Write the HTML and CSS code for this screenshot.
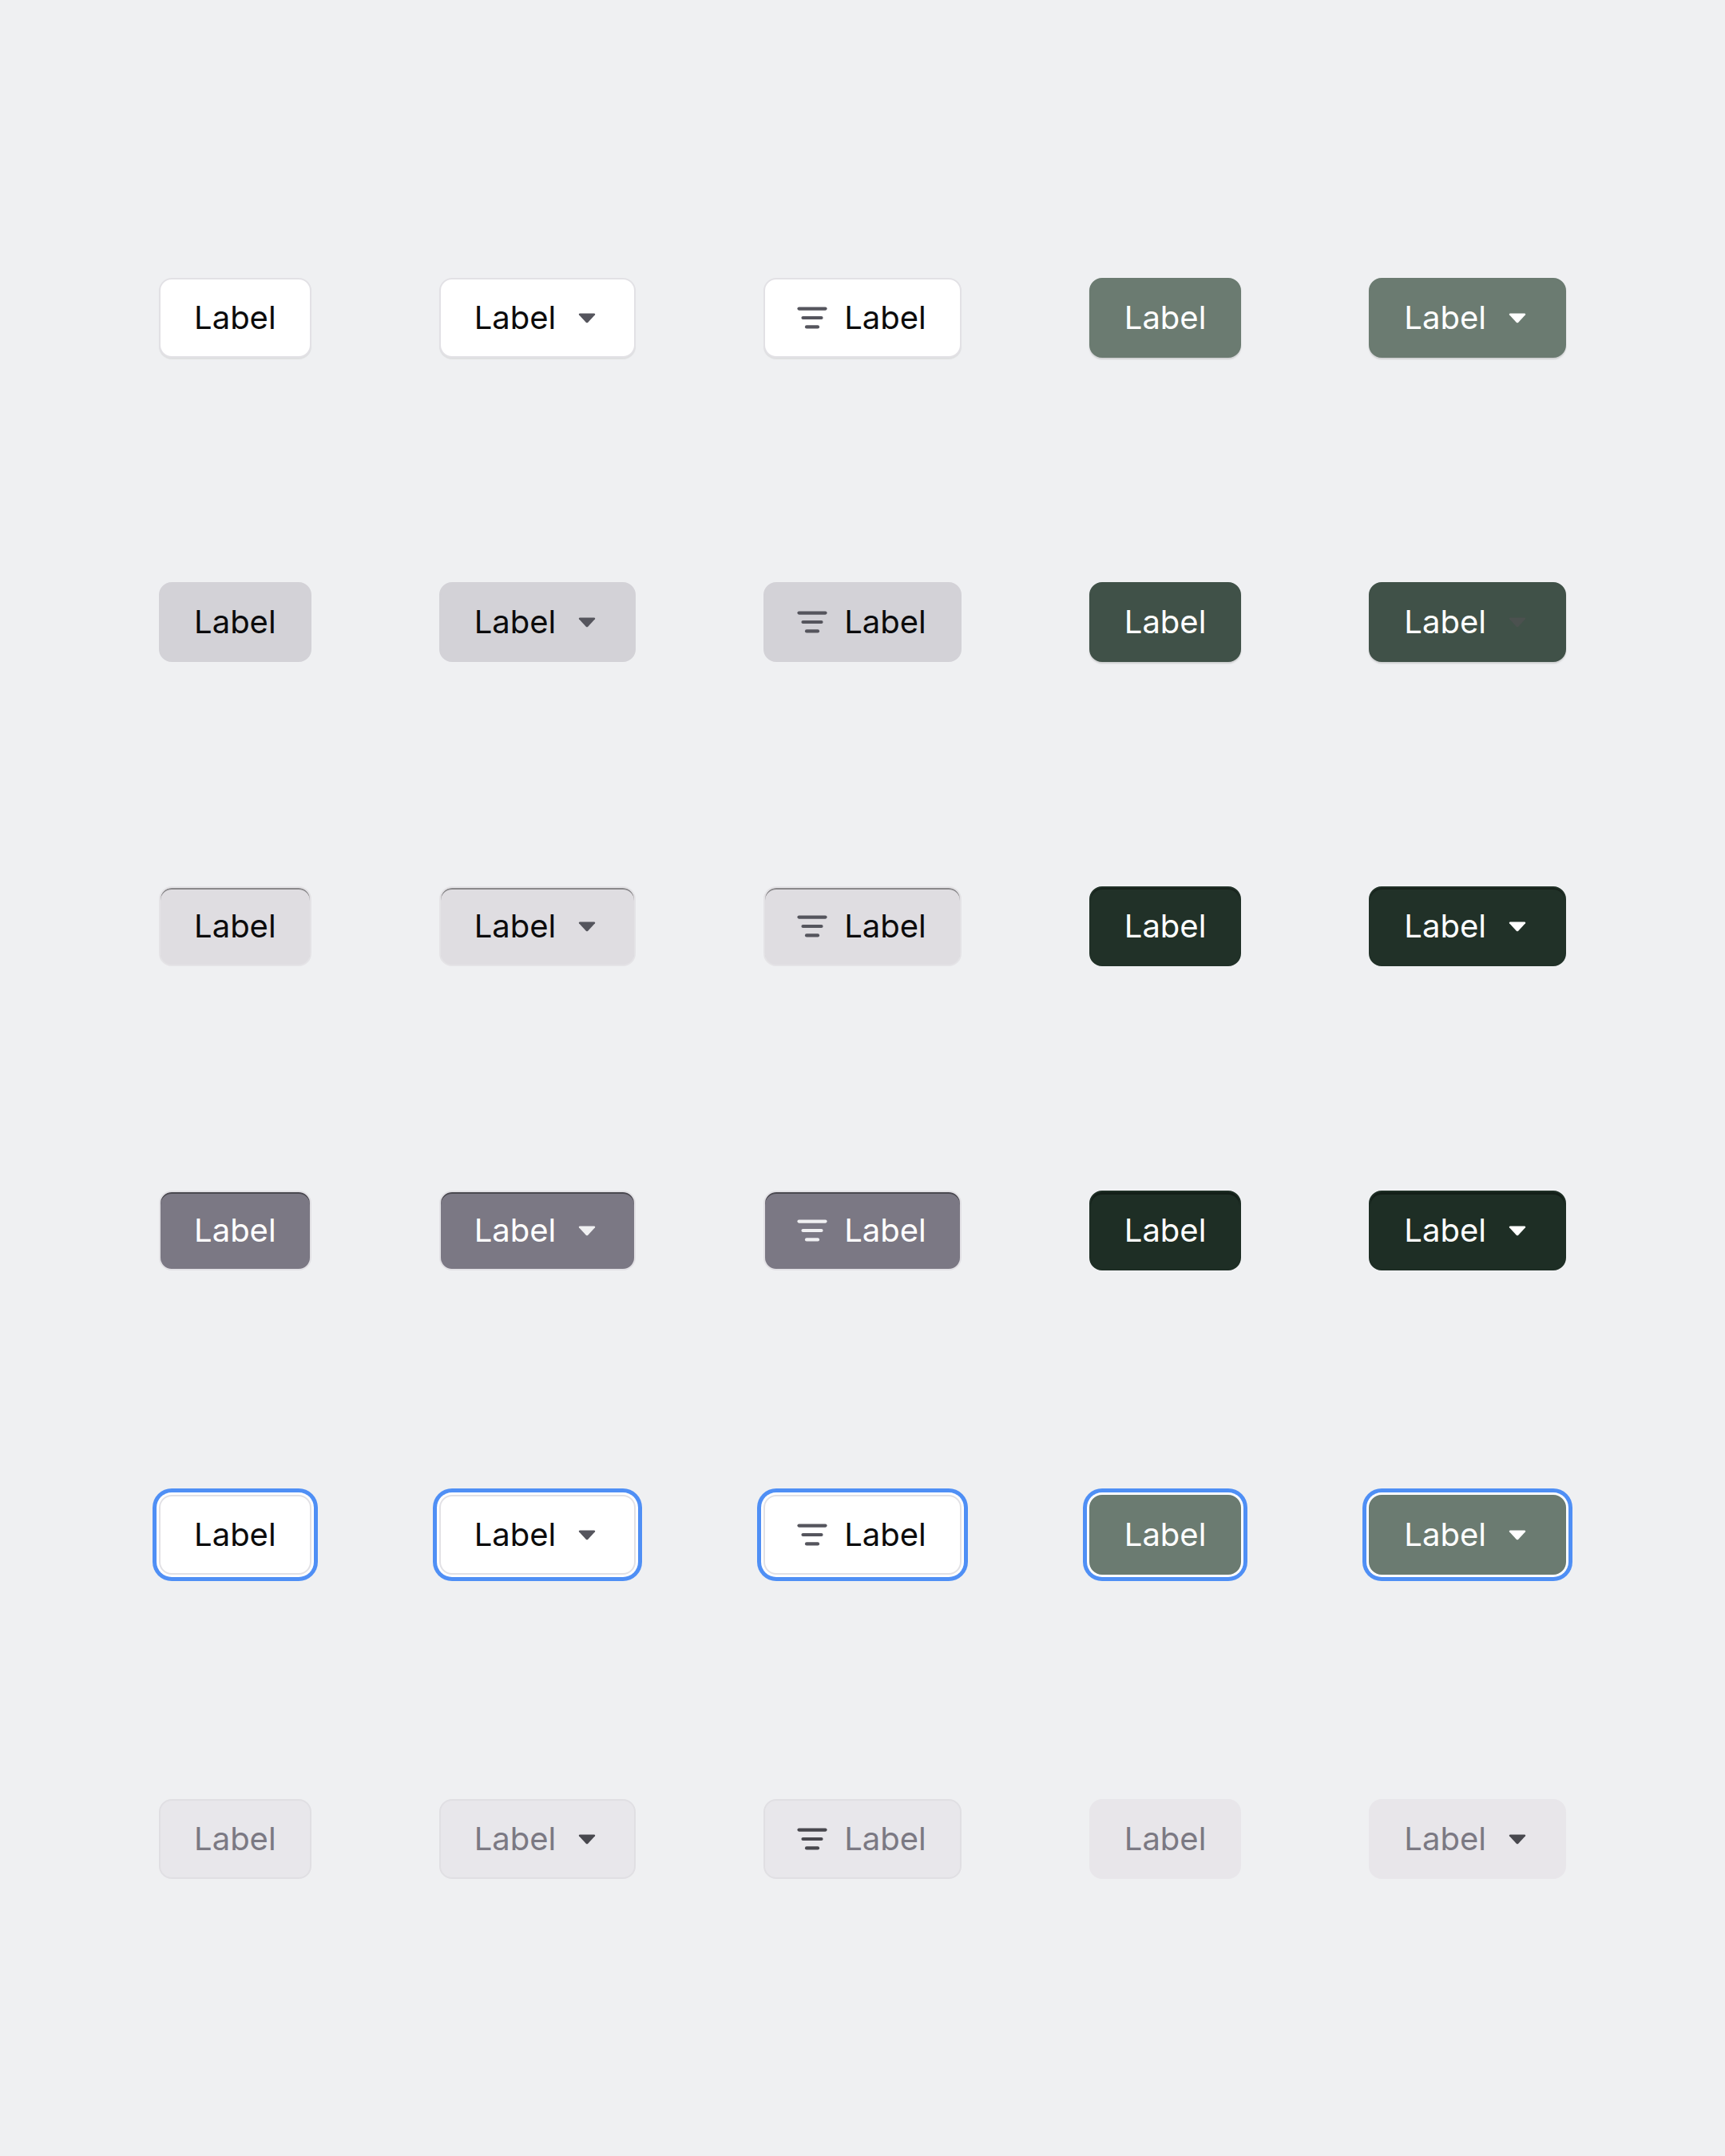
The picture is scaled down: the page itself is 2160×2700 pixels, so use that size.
FILE: index.html
```html
<!DOCTYPE html>
<html lang="en">

<head>
	<meta charset="UTF-8" />
	<meta name="viewport" content="width=device-width, initial-scale=1.0" />
	<title>Buttons</title>
	<link rel="stylesheet" href="styles.css">
</head>

<body>
	<svg width="0" height="0" class="defs">
		<symbol id="caret" viewBox="0 0 22 14">
			<path d="M2 1.5h18c1 0 1.5 1 1 1.8l-9 9.6c-.6.6-1.4.6-2 0l-9-9.6C.5 2.5 1 1.5 2 1.5z" fill="currentColor" />
		</symbol>
		<symbol id="filter" viewBox="0 0 38 28">
			<g stroke="currentColor" stroke-width="4.2" stroke-linecap="round">
				<line x1="2.5" y1="2.6" x2="35.5" y2="2.6" />
				<line x1="7.5" y1="14" x2="30.5" y2="14" />
				<line x1="12" y1="25.4" x2="26" y2="25.4" />
			</g>
		</symbol>
	</svg>

	<div class="board">
		<!-- default -->
		<button class="btn secondary">Label</button>
		<button class="btn secondary menu">Label<svg class="caret"><use href="#caret" /></svg></button>
		<button class="btn secondary filter"><svg class="filter-icon"><use href="#filter" /></svg>Label</button>
		<button class="btn primary">Label</button>
		<button class="btn primary menu">Label<svg class="caret"><use href="#caret" /></svg></button>

		<!-- hover -->
		<button class="btn secondary hover">Label</button>
		<button class="btn secondary menu hover">Label<svg class="caret"><use href="#caret" /></svg></button>
		<button class="btn secondary filter hover"><svg class="filter-icon"><use href="#filter" /></svg>Label</button>
		<button class="btn primary hover">Label</button>
		<button class="btn primary menu hover">Label<svg class="caret"><use href="#caret" /></svg></button>

		<!-- pressed -->
		<button class="btn secondary pressed">Label</button>
		<button class="btn secondary menu pressed">Label<svg class="caret"><use href="#caret" /></svg></button>
		<button class="btn secondary filter pressed"><svg class="filter-icon"><use href="#filter" /></svg>Label</button>
		<button class="btn primary pressed">Label</button>
		<button class="btn primary menu pressed">Label<svg class="caret"><use href="#caret" /></svg></button>

		<!-- selected -->
		<button class="btn secondary selected">Label</button>
		<button class="btn secondary menu selected">Label<svg class="caret"><use href="#caret" /></svg></button>
		<button class="btn secondary filter selected"><svg class="filter-icon"><use href="#filter" /></svg>Label</button>
		<button class="btn primary selected">Label</button>
		<button class="btn primary menu selected">Label<svg class="caret"><use href="#caret" /></svg></button>

		<!-- focus -->
		<button class="btn secondary focus">Label</button>
		<button class="btn secondary menu focus">Label<svg class="caret"><use href="#caret" /></svg></button>
		<button class="btn secondary filter focus"><svg class="filter-icon"><use href="#filter" /></svg>Label</button>
		<button class="btn primary focus">Label</button>
		<button class="btn primary menu focus">Label<svg class="caret"><use href="#caret" /></svg></button>

		<!-- disabled -->
		<button class="btn secondary" disabled>Label</button>
		<button class="btn secondary menu" disabled>Label<svg class="caret"><use href="#caret" /></svg></button>
		<button class="btn secondary filter" disabled><svg class="filter-icon"><use href="#filter" /></svg>Label</button>
		<button class="btn primary" disabled>Label</button>
		<button class="btn primary menu" disabled>Label<svg class="caret"><use href="#caret" /></svg></button>
	</div>
</body>

</html>
```

FILE: styles.css
```css
* {
	padding: 0px;
	margin: 0px;
	box-sizing: border-box;
}

body {
	background-color: #eff0f2;
	font-family: Inter, "Noto Sans", sans-serif;
}

.defs {
	position: absolute;
}

.board {
	height: 2700px;
	display: grid;
	grid-template-columns: repeat(5, auto);
	justify-content: center;
	align-content: center;
	justify-items: start;
	column-gap: 160px;
	row-gap: 281px;
}

.btn {
	height: 100px;
	display: flex;
	align-items: center;
	padding: 0 42px;
	border: 2px solid transparent;
	border-radius: 16px;
	font-family: inherit;
	font-size: 40px;
	font-weight: 400;
	line-height: 1;
	cursor: pointer;
}

.btn.menu {
	padding-right: 48px;
	gap: 28px;
}

.btn.filter {
	padding-left: 40px;
	gap: 21px;
}

.caret {
	width: 22px;
	height: 14px;
	color: #55555d;
}

.filter-icon {
	width: 38px;
	height: 28px;
	color: #55555d;
}

/* secondary */
.secondary {
	background-color: #ffffff;
	border-color: #e2e1e5;
	color: #0b0b0c;
	box-shadow: 0 2px 1px rgba(0, 0, 0, 0.07);
}

.secondary.hover {
	background-color: #d3d2d7;
	border-color: #d3d2d7;
	box-shadow: none;
}

.secondary.pressed {
	background-color: #dfdde1;
	border-color: #e4e3e6;
	box-shadow: inset 0 2px 0 rgba(0, 0, 0, 0.38);
}

.secondary.selected {
	background-color: #7b7884;
	border-color: #e2e1e5;
	color: #ffffff;
	box-shadow: inset 0 2px 0 rgba(0, 0, 0, 0.4);
}

.secondary.selected .caret,
.secondary.selected .filter-icon {
	color: #f0f0f2;
}

.secondary[disabled] {
	background-color: #e8e7eb;
	border-color: #e0dfe3;
	color: #7b7983;
	box-shadow: none;
	cursor: default;
}

.secondary[disabled] .caret,
.secondary[disabled] .filter-icon {
	color: #48484e;
}

/* primary */
.primary {
	background-color: #6b7b71;
	border-color: #6b7b71;
	color: #ffffff;
	box-shadow: 0 2px 2px rgba(0, 0, 0, 0.14);
}

.primary .caret {
	color: #ffffff;
}

.primary.hover {
	background-color: #405148;
	border-color: #405148;
}

.primary.hover .caret {
	color: #4b514f;
}

.primary.pressed {
	background-color: #213128;
	border-color: #213128;
	box-shadow: inset 0 2px 0 rgba(0, 0, 0, 0.3);
}

.primary.selected {
	background-color: #1e2e25;
	border-color: #1e2e25;
	box-shadow: inset 0 3px 0 rgba(0, 0, 0, 0.35);
}

.primary[disabled] {
	background-color: #e8e6ea;
	border-color: #e8e6ea;
	color: #7b7983;
	box-shadow: none;
	cursor: default;
}

.primary[disabled] .caret {
	color: #48484e;
}

/* focus ring */
.btn.focus {
	box-shadow: 0 0 0 3px #ffffff, 0 0 0 8px #4f8ff5;
}
```
